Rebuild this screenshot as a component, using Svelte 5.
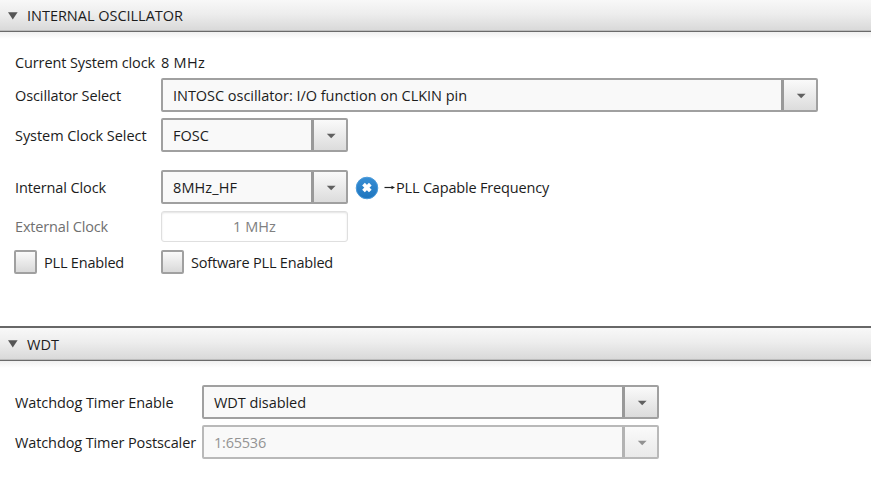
<script>
  // Tracks a label so that it fills the given width in pixels.
  function fit(node, width) {
    const natural = node.getBoundingClientRect().width;
    node.style.letterSpacing = `${(width - natural) / node.textContent.length}px`;
  }
</script>

{#snippet text(value, width)}
  <span class="text" use:fit={width}>{value}</span>
{/snippet}

{#snippet header(value, width)}
  <header>
    <svg class="disclosure" width="10" height="8" viewBox="0 0 10 8"><path d="M0 0.3H9.6L4.8 7.5Z" fill="#555" /></svg>
    {@render text(value, width)}
  </header>
{/snippet}

{#snippet combo(value, width, size, disabled = false)}
  <div class="combo {size}" class:disabled>
    <div class="value">{@render text(value, width)}</div>
    <div class="arrow">
      <svg width="10" height="6" viewBox="0 0 10 6"><path d="M0.8 0.8H9.6L5.2 5.2Z" fill="#606060" /></svg>
    </div>
  </div>
{/snippet}

<main>
  <section class="oscillator">
    {@render header('INTERNAL OSCILLATOR', 156)}
    <div class="body">
      <div class="row current">
        <div class="label">{@render text('Current System clock', 140)}</div>
        {@render text('8 MHz', 44)}
      </div>
      <div class="row select">
        <div class="label">{@render text('Oscillator Select', 106)}</div>
        {@render combo('INTOSC oscillator: I/O function on CLKIN pin', 294, 'wide')}
      </div>
      <div class="row system">
        <div class="label">{@render text('System Clock Select', 131.5)}</div>
        {@render combo('FOSC', 36, 'small')}
      </div>
      <div class="row internal">
        <div class="label">{@render text('Internal Clock', 91)}</div>
        {@render combo('8MHz_HF', 64, 'small')}
        <svg class="status" width="24" height="24" viewBox="0 0 24 24">
          <defs>
            <linearGradient id="blue" x1="0" y1="0" x2="0" y2="1">
              <stop offset="0" stop-color="#388fd5" />
              <stop offset="1" stop-color="#1d74bd" />
            </linearGradient>
          </defs>
          <circle cx="12" cy="12" r="10.8" fill="url(#blue)" stroke="#4b9bdb" stroke-width="1" />
          <path d="M8.5 8.2L15.3 15M15.3 8.2L8.5 15" stroke="#fff" stroke-width="3.8" />
        </svg>
        <svg class="pointer" width="12" height="7" viewBox="0 0 12 7"><path d="M0.5 3.5H9" stroke="#222" stroke-width="1.2" /><path d="M7.5 1.7L11 3.5L7.5 5.3Z" fill="#222" /></svg>
        {@render text('PLL Capable Frequency', 153)}
      </div>
      <div class="row external">
        <div class="label">{@render text('External Clock', 93)}</div>
        <div class="input">{@render text('1 MHz', 43)}</div>
      </div>
      <div class="row checks">
        <div class="check first"><i></i>{@render text('PLL Enabled', 80)}</div>
        <div class="check"><i></i>{@render text('Software PLL Enabled', 142)}</div>
      </div>
    </div>
  </section>

  <section class="wdt">
    {@render header('WDT', 32)}
    <div class="body">
      <div class="row enable">
        <div class="label">{@render text('Watchdog Timer Enable', 158.5)}</div>
        {@render combo('WDT disabled', 92, 'medium')}
      </div>
      <div class="row postscaler">
        <div class="label">{@render text('Watchdog Timer Postscaler', 181)}</div>
        {@render combo('1:65536', 52, 'medium', true)}
      </div>
    </div>
  </section>
</main>

<style>
  :global(body) { margin: 0; background: #fff; overflow: hidden; }
  main {
    width: 871px;
    height: 477px;
    overflow: hidden;
    background: #fff;
    color: #1c1c1c;
    font: 14.5px/20px "Open Sans", "Noto Sans", sans-serif;
  }
  section { box-sizing: border-box; }
  .oscillator { height: 326px; }
  .wdt { border-top: 2px solid #676767; }
  .text { white-space: nowrap; flex: none; }
  .row .text { padding-top: 2px; }
  .current .text, .external .text { padding-top: 1px; }
  header {
    display: flex;
    align-items: center;
    box-sizing: border-box;
    height: 32px;
    padding-left: 8px;
    gap: 9px;
    background: linear-gradient(#f8f8f8, #ededed 45%, #d8d8d8);
    border-bottom: 1px solid #6a6a6a;
    box-shadow: inset 0 -1px #bcbcbc;
  }
  .wdt header { height: 33px; }
  .wdt header .text { padding-top: 1px; }
  .disclosure { flex: none; }
  .body {
    padding-left: 15px;
    background: linear-gradient(#f0f0f0, #fff 7px);
  }
  .row { display: flex; align-items: center; }
  .label { width: 146px; flex: none; display: flex; }
  .wdt .label { width: 187px; }
  .current { padding-top: 20px; height: 20px; }
  .select { margin-top: 6px; }
  .system { margin-top: 6px; }
  .internal { margin-top: 18px; }
  .external { margin-top: 7px; color: #707070; }
  .checks { margin-top: 8px; margin-left: -1px; }
  .enable { padding-top: 24px; }
  .postscaler { margin-top: 6px; }
  .combo {
    display: flex;
    box-sizing: border-box;
    height: 34px;
    border: 2px solid #a0a0a0;
    border-radius: 2px;
    background: #f9f9f9;
  }
  .wide { width: 657px; }
  .small { width: 187px; }
  .medium { width: 457px; }
  .value { flex: 1; display: flex; align-items: center; padding-left: 10px; }
  .arrow {
    display: flex;
    align-items: center;
    justify-content: center;
    box-sizing: border-box;
    width: 35px;
    padding: 1px 0 0 1px;
    border-left: 3px solid #999;
    background: linear-gradient(#fafafa, #dcdcdc);
  }
  .disabled { border-color: #b9b9b9; color: #939393; }
  .disabled .arrow { border-color: #b3b3b3; background: linear-gradient(#fafafa, #eaeaea); }
  .disabled .arrow svg { opacity: 0.65; }
  .status { margin: 1px 0 0 7px; flex: none; }
  .pointer { margin: 1px 0 0 5px; flex: none; }
  .input {
    box-sizing: border-box;
    width: 187px;
    height: 31px;
    display: flex;
    align-items: center;
    justify-content: center;
    border: 1px solid #dfdfdf;
    border-radius: 3px;
    box-shadow: inset 0 1px 2px #e3e3e3;
    color: #808080;
  }
  .check { display: flex; align-items: center; gap: 7px; }
  .first { width: 147px; }
  .check i {
    box-sizing: border-box;
    width: 23px;
    height: 24px;
    border: 2px solid #a0a0a0;
    border-radius: 2px;
    background: linear-gradient(#fafafa, #d9d9d9);
  }
</style>
